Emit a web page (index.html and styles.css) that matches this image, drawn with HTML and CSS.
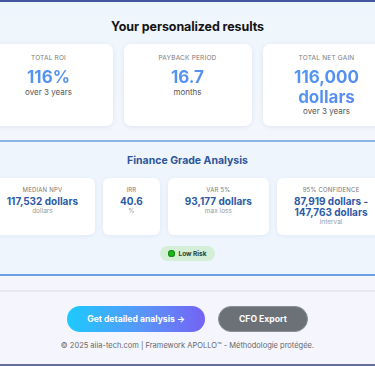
FILE: index.html
```html
<!DOCTYPE html>
<html lang="en">
  <head>
    <meta charset="utf-8" />
    <link rel="stylesheet" href="styles.css">
  </head>
  <body>
    <div class="page">
      <!-- Résultats -->
      <section class="results">
        <h2 class="results-title">Your personalized results</h2>
        <div class="result-cards">
          <div class="result-card">
            <div class="result-label">Total ROI</div>
            <div class="result-value">116%</div>
            <div class="result-sub">over 3 years</div>
          </div>
          <div class="result-card">
            <div class="result-label">Payback period</div>
            <div class="result-value">16.7</div>
            <div class="result-sub">months</div>
          </div>
          <div class="result-card">
            <div class="result-label">Total net gain</div>
            <div class="result-value">116,000<br>dollars</div>
            <div class="result-sub">over 3 years</div>
          </div>
        </div>
      </section>

      <!-- Analyse finance -->
      <section class="finance">
        <h3 class="finance-title">Finance Grade Analysis</h3>
        <div class="finance-cards">
          <div class="finance-card">
            <div class="finance-label">Median NPV</div>
            <div class="finance-value">117,532 dollars</div>
            <div class="finance-sub">dollars</div>
          </div>
          <div class="finance-card">
            <div class="finance-label">IRR</div>
            <div class="finance-value">40.6</div>
            <div class="finance-sub">%</div>
          </div>
          <div class="finance-card">
            <div class="finance-label">VaR 5%</div>
            <div class="finance-value">93,177 dollars</div>
            <div class="finance-sub">max loss</div>
          </div>
          <div class="finance-card">
            <div class="finance-label">95% Confidence</div>
            <div class="finance-value">87,919 dollars -<br>147,763 dollars</div>
            <div class="finance-sub">interval</div>
          </div>
        </div>
        <div class="risk-badge"><span class="risk-dot"></span>Low Risk</div>
      </section>

      <!-- Actions -->
      <section class="actions">
        <div class="actions-divider"></div>
        <div class="actions-buttons">
          <button class="btn btn-primary">Get detailed analysis →</button>
          <button class="btn btn-secondary">CFO Export</button>
        </div>
        <p class="footer-note">© 2025 aiia-tech.com | Framework APOLLO™ - Méthodologie protégée.</p>
      </section>
    </div>
  </body>
</html>
```

FILE: styles.css
```css
body {
  margin: 0;
  font-family: Inter, "Noto Sans", sans-serif;
  overflow: hidden;
}

.page {
  height: 366px;
  box-sizing: border-box;
  border-top: 2px solid #44559f;
  border-bottom: 2px solid #65709f;
  display: flex;
  flex-direction: column;
  overflow: hidden;
}

/* Résultats */
.results {
  background: linear-gradient(180deg, #eef6fd 0%, #f4f6fc 100%);
  padding: 17px 0 14px;
  border-bottom: 2px solid #8cb4e7;
}

.results-title {
  margin: 0 0 9px;
  text-align: center;
  font-size: 12.5px;
  line-height: 16px;
  font-weight: 700;
  letter-spacing: -0.1px;
  color: #141414;
}

.result-cards {
  display: flex;
  justify-content: center;
  gap: 11px;
}

.result-card {
  flex: 0 0 128px;
  background: #fff;
  border-radius: 7px;
  box-shadow: 0 1px 5px rgba(60, 90, 150, 0.1);
  padding: 10px 6px 10px;
  text-align: center;
  box-sizing: border-box;
}

.result-label {
  font-size: 6.5px;
  line-height: 9px;
  color: #7a7a7a;
  text-transform: uppercase;
  letter-spacing: 0.2px;
}

.result-value {
  margin-top: 5px;
  font-size: 17px;
  line-height: 19.5px;
  font-weight: 700;
  color: #4f8ff2;
  background: linear-gradient(135deg, #4c9cf6 0%, #5d86ee 100%);
  -webkit-background-clip: text;
  background-clip: text;
  -webkit-text-fill-color: transparent;
}

.result-sub {
  font-size: 8px;
  line-height: 9px;
  color: #555;
}

/* Analyse finance */
.finance {
  background: #eef5fd;
  padding: 12px 0 13px;
  border-bottom: 2px solid #6c9fe6;
  display: flex;
  flex-direction: column;
  align-items: center;
}

.finance-title {
  margin: 0 0 10px;
  font-size: 10.5px;
  line-height: 14px;
  font-weight: 700;
  color: #2f559b;
}

.finance-cards {
  display: flex;
  justify-content: center;
  gap: 8px;
  width: 100%;
}

.finance-card {
  flex: 0 0 auto;
  background: #fff;
  border-radius: 6px;
  box-shadow: 0 1px 4px rgba(60, 90, 150, 0.08);
  padding: 8px 17px 9px;
  text-align: center;
}

.finance-label {
  font-size: 6px;
  line-height: 8px;
  color: #777;
  text-transform: uppercase;
  letter-spacing: 0.2px;
}

.finance-value {
  margin-top: 2px;
  font-size: 10px;
  line-height: 11px;
  font-weight: 700;
  color: #2d5aa6;
}

.finance-sub {
  font-size: 6.5px;
  line-height: 8px;
  color: #9a9a9a;
}

.risk-badge {
  margin-top: 11px;
  height: 15px;
  padding: 0 8px 0 8px;
  border-radius: 8px;
  background: #d4eed8;
  display: flex;
  align-items: center;
  gap: 3px;
  font-size: 6.5px;
  font-weight: 700;
  color: #2d3f2e;
}

.risk-dot {
  width: 7px;
  height: 7px;
  border-radius: 50%;
  background: #1fb51f;
  box-shadow: inset 0 0 0 1px #178c17;
}

/* Actions */
.actions {
  flex: 1;
  background: #f5f6fd;
  display: flex;
  flex-direction: column;
  align-items: center;
}

.actions-divider {
  align-self: stretch;
  height: 14px;
  border-bottom: 2px solid #e8e9ee;
}

.actions-buttons {
  margin-top: 14px;
  display: flex;
  gap: 13px;
}

.btn {
  height: 26px;
  padding: 0 20px;
  border-radius: 13px;
  font-family: inherit;
  font-size: 8.6px;
  font-weight: 700;
  color: #fff;
  border: none;
  white-space: nowrap;
  cursor: pointer;
}

.btn-primary {
  background: linear-gradient(90deg, #1ccafd 0%, #5a95f8 55%, #7463f4 100%);
}

.btn-secondary {
  background: #6b7177;
  border: 1px solid #8a9096;
}

.footer-note {
  margin: 9px 0 0;
  font-size: 7.5px;
  line-height: 10px;
  color: #666;
}
```
